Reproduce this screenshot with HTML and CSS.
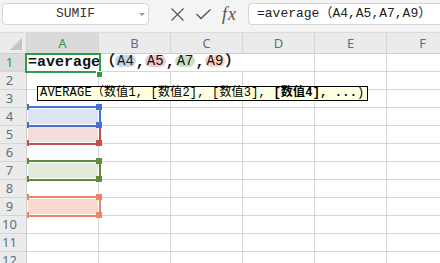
FILE: index.html
```html
<!DOCTYPE html>
<html lang="zh">
<head>
    <meta charset="UTF-8">
    <title>SUMIF average</title>
    <link rel="stylesheet" href="styles.css">
</head>
<body>
    <div class="toolbar">
        <div class="namebox">
            <span>SUMIF</span>
            <i class="caret"></i>
        </div>
        <div class="tools">
            <svg class="icon" width="13" height="13" viewBox="0 0 13 13">
                <path d="M0.5 0.5 L12.5 12.5 M12.5 0.5 L0.5 12.5" stroke="#555" stroke-width="1.2" fill="none"/>
            </svg>
            <svg class="icon" width="15" height="11" viewBox="0 0 15 11">
                <path d="M0.5 5 L5 9.5 L14.5 0.5" stroke="#555" stroke-width="1.3" fill="none"/>
            </svg>
            <span class="fx">fx</span>
        </div>
        <div class="formula">=average（A4,A5,A7,A9）</div>
    </div>

    <div class="sheet">
        <div id="grid" class="grid">
            <!-- headers and rows filled by script -->
        </div>

        <div class="range salmon"><i class="h tl"></i><i class="h tr"></i><i class="h bl"></i><i class="h br"></i></div>
        <div class="range green"><i class="h tl"></i><i class="h tr"></i><i class="h bl"></i><i class="h br"></i></div>
        <div class="range red"><i class="h tl"></i><i class="h tr"></i><i class="h bl"></i><i class="h br"></i></div>
        <div class="range blue"><i class="h tl"></i><i class="h tr"></i><i class="h bl"></i><i class="h br"></i></div>

        <div class="editor-text">=average（<span class="ref r-blue">A4</span>,<span class="ref r-red">A5</span>,<span class="ref r-green">A7</span>,<span class="ref r-salmon">A9</span>）</div>
        <div class="editor"></div>
        <div class="fill-handle"></div>

        <div class="tip">AVERAGE（数值1, [数值2], [数值3], <b>[数值4], ...</b>)</div>
    </div>

    <script>
        const cols = ["A", "B", "C", "D", "E", "F"];
        const grid = document.getElementById("grid");

        function addCell(cls, text) {
            let cell = document.createElement("div");
            cell.className = cls;
            cell.textContent = text || "";
            grid.appendChild(cell);
        }

        addCell("corner");
        cols.forEach((c, i) => addCell(i === 0 ? "ch sel" : "ch", c));

        for (let r = 1; r <= 12; r++) {
            addCell(r === 1 ? "rh sel" : "rh", r);
            for (let j = 0; j < cols.length; j++) {
                addCell("cell");
            }
        }
    </script>
</body>
</html>
```

FILE: styles.css
```css
body {
    margin: 0;
    width: 440px;
    height: 263px;
    overflow: hidden;
    background-color: #fff;
    font-family: "Noto Sans", sans-serif;
}
.toolbar {
    display: flex;
    align-items: flex-start;
    height: 33px;
    padding: 3px 0 0 2px;
    box-sizing: border-box;
    background-color: #f4f4f4;
    border-bottom: 1px solid #dcdcdc;
}
.toolbar > div {
    flex-shrink: 0;
}
.namebox {
    position: relative;
    width: 147px;
    height: 22px;
    box-sizing: border-box;
    background-color: #fff;
    border: 1px solid #d6d6d6;
    border-radius: 4px;
    text-align: center;
    font: 13px/20px "Liberation Mono", monospace;
    color: #333;
}
.namebox .caret {
    position: absolute;
    right: 3px;
    top: 9px;
    border-left: 3px solid transparent;
    border-right: 3px solid transparent;
    border-top: 3px solid #9a9a9a;
}
.tools {
    display: flex;
    align-items: center;
    width: 99px;
    height: 22px;
    padding-left: 22px;
    box-sizing: border-box;
}
.tools .icon {
    margin-right: 12px;
}
.fx {
    font: italic 18px/20px "Liberation Serif", serif;
    letter-spacing: 1px;
    color: #555;
    margin-left: -1px;
}
.formula {
    width: 192px;
    height: 22px;
    box-sizing: border-box;
    background-color: #fff;
    border: 1px solid #d6d6d6;
    border-right: none;
    border-radius: 4px 0 0 4px;
    padding-left: 8px;
    font: 13px/20px "Liberation Mono", "Noto Sans CJK SC", monospace;
    color: #222;
    white-space: nowrap;
    overflow: hidden;
}
.sheet {
    position: relative;
}
.grid {
    display: grid;
    grid-template-columns: 27px repeat(6, 72px);
    grid-template-rows: 21px;
    grid-auto-rows: 18px;
}
.grid > div {
    box-sizing: border-box;
}
.corner {
    position: relative;
    background-color: #ebebeb;
    border-right: 1px solid #cfcfcf;
    border-bottom: 1px solid #cfcfcf;
}
.corner::after {
    content: "";
    position: absolute;
    right: 4px;
    bottom: 3px;
    border-left: 12px solid transparent;
    border-bottom: 12px solid #c4c4c4;
}
.ch {
    background-color: #ebebeb;
    border-right: 1px solid #d6d6d6;
    border-bottom: 1px solid #cfcfcf;
    text-align: center;
    font-size: 13px;
    line-height: 20px;
    color: #5f6f80;
}
.ch.sel {
    background-color: #dadada;
    color: #2e9b48;
}
.rh {
    position: relative;
    z-index: 3;
    background-color: #ebebeb;
    border-right: 1px solid #cfcfcf;
    border-bottom: 1px solid #d6d6d6;
    padding-right: 7px;
    text-align: center;
    font-size: 13px;
    line-height: 17px;
    color: #5f6f80;
}
.rh.sel {
    background-color: #dcdcdc;
    color: #2e9b48;
}
.cell {
    background-color: #fff;
    border-right: 1px solid #d6d6d6;
    border-bottom: 1px solid #d6d6d6;
}

/* reference ranges */
.range {
    position: absolute;
    z-index: 1;
    left: 25px;
    width: 76px;
    height: 21px;
    box-sizing: border-box;
    border: 2px solid;
    box-shadow: inset 0 0 0 1px #fff;
}
.range .h {
    position: absolute;
    width: 6px;
    height: 6px;
}
.range .tl { left: -4px; top: -4px; }
.range .tr { right: -3px; top: -4px; }
.range .bl { left: -4px; bottom: -3px; }
.range .br { right: -3px; bottom: -3px; }
.blue {
    top: 73px;
    border-color: #4570d0;
    background-color: #dbe3f4;
}
.blue .h { background-color: #4570d0; }
.red {
    top: 91px;
    border-color: #c0504d;
    background-color: #f3dedd;
}
.red .h { background-color: #c0504d; }
.green {
    top: 127px;
    border-color: #5f8b40;
    background-color: #e2eadb;
}
.green .h { background-color: #5f8b40; }
.salmon {
    top: 163px;
    border-color: #ee8466;
    background-color: #f9d8ce;
}
.salmon .h { background-color: #ee8466; }

/* cell being edited */
.editor-text {
    position: absolute;
    z-index: 4;
    left: 27px;
    top: 21px;
    width: 218px;
    height: 17px;
    padding-left: 1px;
    background-color: #fff;
    font: bold 15px/17px "Liberation Mono", "Noto Sans CJK SC", monospace;
    color: #111;
    white-space: nowrap;
}
.ref {
    display: inline-block;
    height: 12px;
    padding: 0 2px;
    border-radius: 6px;
    font-weight: normal;
    font-size: 14px;
    line-height: 12px;
    vertical-align: 1px;
}
.r-blue { background-color: #c8d5f1; }
.r-red { background-color: #f0c9c8; }
.r-green { background-color: #cde0c5; }
.r-salmon { background-color: #fbcec2; }
.editor {
    position: absolute;
    z-index: 5;
    left: 25px;
    top: 20px;
    width: 76px;
    height: 20px;
    box-sizing: border-box;
    border: 2px solid #2e9b48;
}
.fill-handle {
    position: absolute;
    z-index: 6;
    left: 96px;
    top: 38px;
    width: 5px;
    height: 5px;
    background-color: #2e9b48;
    border: 1px solid #fff;
    border-right: none;
    border-bottom: none;
}
.tip {
    position: absolute;
    z-index: 7;
    left: 37px;
    top: 53px;
    width: 331px;
    height: 15px;
    box-sizing: border-box;
    padding-left: 2px;
    background-color: #ffffe1;
    border: 1px solid #000;
    font: 12px/13px "Liberation Mono", "Noto Sans CJK SC", monospace;
    letter-spacing: 0.2px;
    color: #000;
    white-space: nowrap;
}
```
